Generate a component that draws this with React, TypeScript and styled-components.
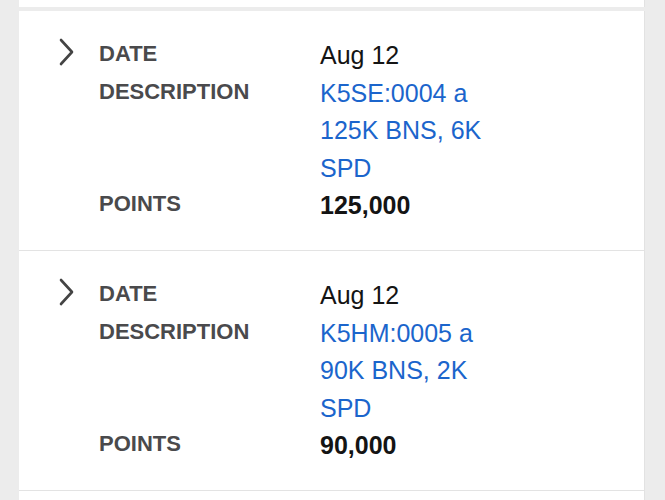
import * as React from 'react';
import styled, {createGlobalStyle} from 'styled-components';

const GlobalStyle = createGlobalStyle`
html, body {
    margin: 0;
    padding: 0;
    background: #ececec;
    font-family: "Liberation Sans", Arial, sans-serif;
}
`

const Page = styled.div`
display: flex;
flex-direction: column;
gap: 4px;
padding: 0 20px 0 19px;
height: 500px;
overflow: hidden;
`

const Card = styled.div`
background: #fff;
border-right: 1px solid #e2e2e2;
`

const Stub = styled(Card)`
height: 7px;
flex-shrink: 0;
`

const Transaction = styled.div`
display: flex;
align-items: flex-start;
height: 240px;
box-sizing: border-box;
padding: 26px 0 0 37px;
border-bottom: 1px solid #e3e3e3;
`

const Toggle = styled.div`
width: 22px;
height: 28px;
margin-top: 1px;
margin-right: 21px;
color: #444;
flex-shrink: 0;
`

const Fields = styled.div`
display: grid;
grid-template-columns: 221px 190px;
align-items: start;
line-height: 37.5px;
`

// labels sit a touch higher than the values beside them
const Label = styled.div`
font-size: 22px;
line-height: 33.5px;
font-weight: 700;
color: #4a4a4c;
`

const Value = styled.div<{link?: boolean; strong?: boolean}>`
font-size: 25px;
color: ${p => p.link ? '#1b65cc' : '#141414'};
font-weight: ${p => p.strong ? 700 : 400};
`

interface Entry {
    date: string;
    description: string;
    points: string;
}

const entries: Entry[] = [
    {date: 'Aug 12', description: 'K5SE:0004 a 125K BNS, 6K SPD', points: '125,000'},
    {date: 'Aug 12', description: 'K5HM:0005 a 90K BNS, 2K SPD', points: '90,000'},
];

function Chevron() {
    return <svg width="22" height="28" viewBox="0 0 22 28" fill="none">
        <polyline points="5,2 16,14 5,26" stroke="currentColor" strokeWidth="2.6" strokeLinecap="round" strokeLinejoin="round"/>
    </svg>
}

function Row(props: Entry) {
    return <Transaction>
        <Toggle><Chevron/></Toggle>
        <Fields>
            <Label>DATE</Label>
            <Value>{props.date}</Value>
            <Label>DESCRIPTION</Label>
            <Value link>{props.description}</Value>
            <Label>POINTS</Label>
            <Value strong>{props.points}</Value>
        </Fields>
    </Transaction>
}

export default function App() {
    return <>
        <GlobalStyle/>
        <Page>
            <Stub/>
            <Card>
                {entries.map((e, i) => <Row key={i} {...e}/>)}
                <Transaction/>
            </Card>
        </Page>
    </>
}
